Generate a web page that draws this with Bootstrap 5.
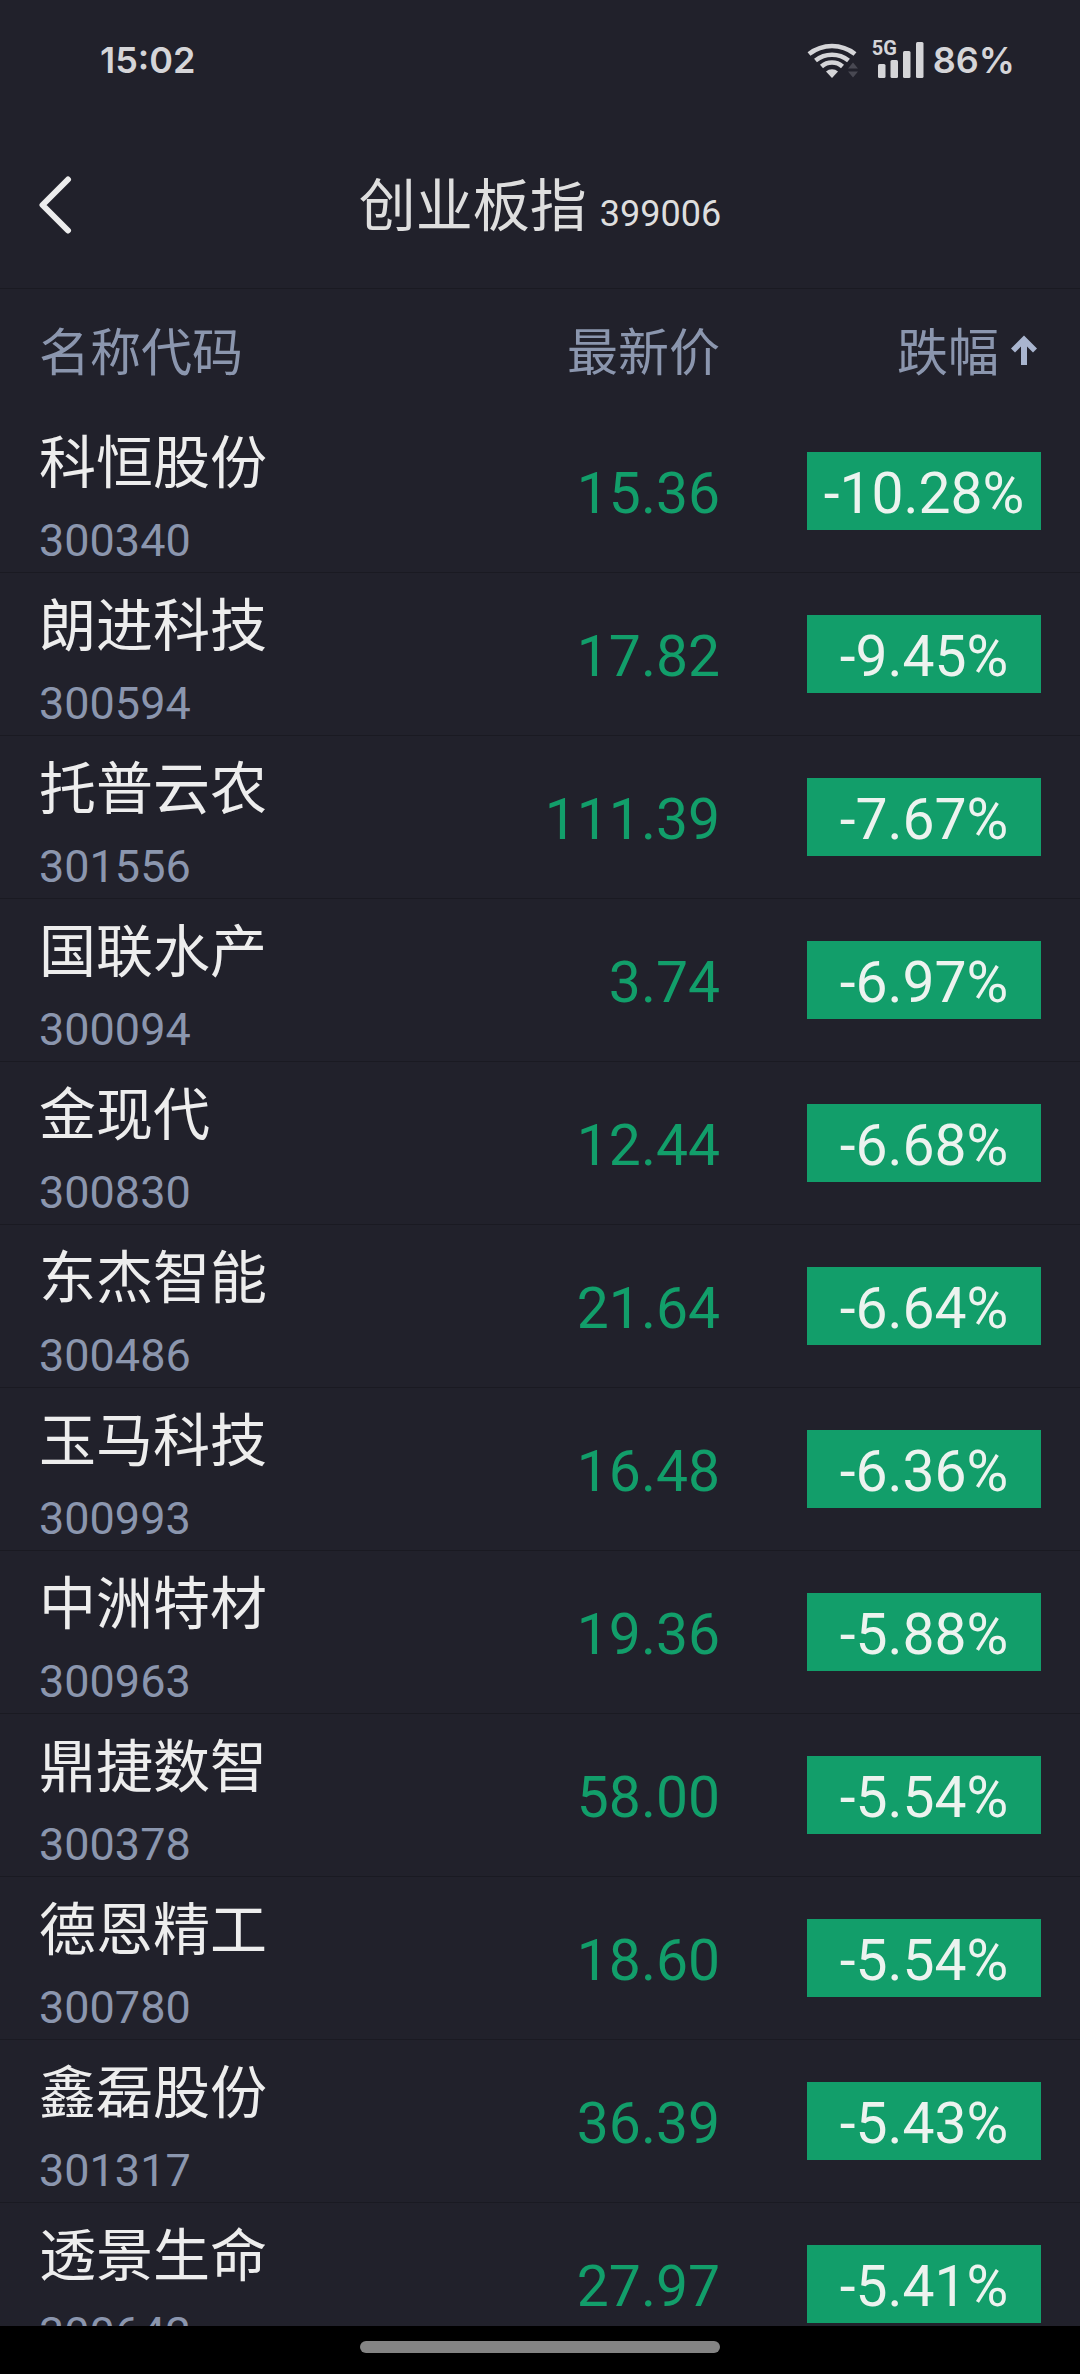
<!DOCTYPE html>
<html lang="zh-CN">
<head>
<meta charset="utf-8">
<meta name="viewport" content="width=device-width, initial-scale=1">
<title>创业板指 399006</title>
<link href="https://cdn.jsdelivr.net/npm/bootstrap@5.3.0/dist/css/bootstrap.min.css" rel="stylesheet">
<style>
  :root { --ink: #ededed; --muted: #8b96ae; --down: #129e6a; --bg: #21212b; --line: #1a1a22; --edge: 39px; }
  body { background: var(--bg); color: var(--ink); font-family: Roboto, "Noto Sans CJK SC", sans-serif; }
  .status-bar { height: 120px; padding: 0 65px 0 100px; font: 600 36px/120px Inter, sans-serif; color: #d5d5d8; }
  .net-tag { font: 700 20px/20px Roboto, sans-serif; left: 0; top: -2px; }
  .signal-box { width: 53px; height: 40px; }
  .title-bar { height: 169px; border-bottom: 1px solid var(--line); display: grid; grid-template-columns: 1fr auto 1fr; padding: 0 var(--edge); }
  .back-btn { width: 34px; height: 60px; }
  .page-title { padding-top: 12px; font-size: 57px; line-height: 80px; font-weight: 400; color: #dedede; }
  .page-title small { font-size: 36px; margin-left: 13px; }
  .quotes { border-collapse: separate; border-spacing: 0; table-layout: fixed; }
  .quotes th { height: 121px; padding: 8px 0 0; font-size: 51px; line-height: 72px; font-weight: 400; color: var(--muted); }
  .quotes td { height: 163px; padding: 0; border-bottom: 1px solid var(--line); }
  .quotes tr > :first-child { padding-left: var(--edge); }
  .quotes tr > :last-child { padding-right: var(--edge); }
  .quotes .sort-btn { font: inherit; color: inherit; }
  .stock-name { padding-top: 8px; font-size: 57px; line-height: 92px; }
  .stock-code { font-size: 45px; line-height: 62px; color: var(--muted); }
  .quotes .price { padding-top: 6px; font-size: 57px; line-height: 78px; color: var(--down); }
  .change { width: 234px; padding-top: 6px; font-size: 57px; line-height: 72px; background: var(--down); color: #ecf3ef; }
  .gesture-bar { height: 48px; padding-bottom: 6px; }
  .gesture-pill { width: 360px; height: 12px; background: #848484; }
</style>
</head>
<body>
<div class="vh-100 d-flex flex-column overflow-hidden">
  <div class="status-bar d-flex justify-content-between align-items-center flex-shrink-0">
    <time>15:02</time>
    <div class="d-flex align-items-center">
      <svg width="54" height="40" viewBox="808 40 54 40" fill="none" stroke="#d5d5d8" stroke-width="4.6" aria-label="Wi-Fi">
        <path d="M811 54a37 37 0 0 1 46 0"/>
        <path d="M817.500 60.500a26.500 26.500 0 0 1 33 0"/>
        <path d="M823.500 66.500a16 16 0 0 1 21 0"/>
        <path d="M834 78l-6-6.500a9 9 0 0 1 12 0z" fill="#d5d5d8" stroke="none"/>
        <path d="M855 62.500l5 6h-10zM855 77.500l5-6h-10z" fill="#484852" stroke="none"/>
      </svg>
      <div class="signal-box position-relative ms-2 ps-1 me-2">
        <span class="net-tag position-absolute ps-1">5G</span>
        <svg class="d-block" width="54" height="40" viewBox="874 40 54 40" fill="#d5d5d8" aria-label="信号">
          <rect x="880" y="64" width="7.500" height="14" rx="1.500"/>
          <rect x="892.500" y="60" width="7.500" height="18" rx="1.500"/>
          <rect x="905" y="51" width="7.500" height="27" rx="1.500"/>
          <rect x="918" y="42" width="7.500" height="36" rx="1.500"/>
        </svg>
      </div>
      <span class="ps-1">86%</span>
    </div>
  </div>

  <header class="title-bar align-items-center flex-shrink-0">
    <button type="button" class="back-btn btn p-0 border-0 d-flex align-items-center" aria-label="返回">
      <svg width="34" height="60" viewBox="0 0 34 60" fill="none" stroke="#ededed" stroke-width="6" stroke-linecap="round" stroke-linejoin="round"><path d="M29 5.500L3.500 31L29 56.500"/></svg>
    </button>
    <h1 class="page-title mb-0">创业板指<small class="fw-normal">399006</small></h1>
  </header>

  <main class="flex-grow-1 overflow-hidden">
    <table class="quotes w-100">
      <colgroup><col style="width:40%"><col style="width:26.667%"><col></colgroup>
      <thead>
        <tr>
          <th scope="col">名称代码</th>
          <th scope="col" class="text-end">最新价</th>
          <th scope="col"><button type="button" class="sort-btn btn p-0 border-0 rounded-0 d-flex align-items-center ms-auto">跌幅<svg class="ms-2 mb-2" width="34" height="34" viewBox="1006 332 34 34" aria-label="升序"><path d="M1023 334.500L1036 347.500L1032 351.500L1026 345.500V364H1020V345.500L1014 351.500L1010 347.500Z" fill="#a9b5cf"/></svg></button></th>
        </tr>
      </thead>
      <tbody id="rows"></tbody>
    </table>
  </main>

  <div class="gesture-bar bg-black flex-shrink-0 d-flex justify-content-center align-items-center">
    <div class="gesture-pill rounded-pill"></div>
  </div>
</div>
<script>
  const stocks = [
    ["科恒股份", "300340", "15.36", "-10.28%"],
    ["朗进科技", "300594", "17.82", "-9.45%"],
    ["托普云农", "301556", "111.39", "-7.67%"],
    ["国联水产", "300094", "3.74", "-6.97%"],
    ["金现代", "300830", "12.44", "-6.68%"],
    ["东杰智能", "300486", "21.64", "-6.64%"],
    ["玉马科技", "300993", "16.48", "-6.36%"],
    ["中洲特材", "300963", "19.36", "-5.88%"],
    ["鼎捷数智", "300378", "58.00", "-5.54%"],
    ["德恩精工", "300780", "18.60", "-5.54%"],
    ["鑫磊股份", "301317", "36.39", "-5.43%"],
    ["透景生命", "300642", "27.97", "-5.41%"]
  ];
  document.getElementById("rows").innerHTML = stocks.map(([name, code, price, change]) => `
    <tr>
      <td><div class="stock-name text-nowrap">${name}</div><div class="stock-code">${code}</div></td>
      <td class="price text-end">${price}</td>
      <td><div class="change text-center ms-auto">${change}</div></td>
    </tr>`).join("");
</script>
<script src="https://cdn.jsdelivr.net/npm/bootstrap@5.3.0/dist/js/bootstrap.bundle.min.js"></script>
</body>
</html>
